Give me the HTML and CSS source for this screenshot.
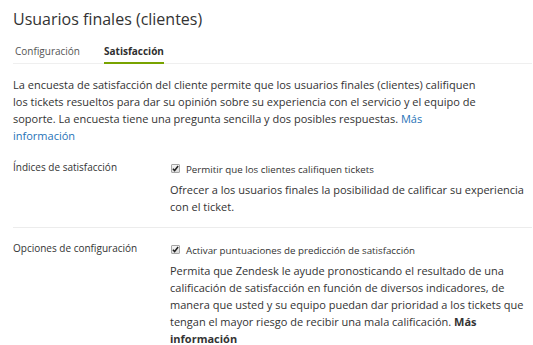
FILE: index.html
```html
<!DOCTYPE html>
<html>
<head>
    <title>Usuarios finales (clientes)</title>
    <link rel="stylesheet" href="styles.css">
</head>
<body>
    <div id="page">
        <h1 class="titulo">Usuarios finales (clientes)</h1>
        <div class="tabs">
            <span class="tab">Configuración</span>
            <span class="tab activo">Satisfacción</span>
        </div>
        <p class="intro">La encuesta de satisfacción del cliente permite que los usuarios finales (clientes) califiquen<br>los tickets resueltos para dar su opinión sobre su experiencia con el servicio y el equipo de<br>soporte. La encuesta tiene una pregunta sencilla y dos posibles respuestas. <a href="#" class="link">Más<br>información</a></p>

        <div class="fila">
            <div class="etiqueta">Índices de satisfacción</div>
            <div class="campo">
                <div class="check">
                    <span class="caja"><svg width="7" height="7" viewBox="0 0 8 8"><path d="M1 4.2 L3 6.3 L7 1.2" fill="none" stroke="#222" stroke-width="1.7"/></svg></span>
                    Permitir que los clientes califiquen tickets
                </div>
                <p class="desc">Ofrecer a los usuarios finales la posibilidad de calificar su experiencia<br>con el ticket.</p>
            </div>
        </div>

        <div class="fila ultima">
            <div class="etiqueta">Opciones de configuración</div>
            <div class="campo">
                <div class="check">
                    <span class="caja"><svg width="7" height="7" viewBox="0 0 8 8"><path d="M1 4.2 L3 6.3 L7 1.2" fill="none" stroke="#222" stroke-width="1.7"/></svg></span>
                    Activar puntuaciones de predicción de satisfacción
                </div>
                <p class="desc">Permita que Zendesk le ayude pronosticando el resultado de una<br>calificación de satisfacción en función de diversos indicadores, de<br>manera que usted y su equipo puedan dar prioridad a los tickets que<br>tengan el mayor riesgo de recibir una mala calificación. <b>Más<br>información</b></p>
            </div>
        </div>
    </div>
</body>
</html>
```
FILE: styles.css
```css
body {
    margin: 0;
    background-color: #ffffff;
    color: #333333;
    font-family: "Open Sans", Arial, sans-serif;
}

#page {
    padding: 9px 1px 0 13px;
}

.titulo {
    margin: 0;
    font-size: 16px;
    font-weight: normal;
    color: #333333;
    line-height: 20px;
}

.tabs {
    display: flex;
    gap: 24px;
    margin-top: 15px;
    padding-left: 2px;
    border-bottom: 1px solid #efefef;
}

.tab {
    font-size: 10px;
    line-height: 14px;
    color: #555555;
    padding-bottom: 4px;
    border-bottom: 2px solid transparent;
    margin-bottom: -1px;
}

.activo {
    font-weight: bold;
    color: #2f2f2f;
    border-bottom-color: #78a300;
}

.intro {
    margin: 12px 0 0;
    font-size: 11px;
    line-height: 17px;
    white-space: nowrap;
}

.link {
    color: #1f73b7;
    text-decoration: none;
}

.fila {
    display: flex;
    border-bottom: 1px solid #ececec;
    margin-top: 19px;
    padding-bottom: 12px;
}

.ultima {
    border-bottom: none;
    margin-top: 16px;
}

.etiqueta {
    width: 157px;
    font-size: 10px;
    line-height: 14px;
    margin-top: -3px;
}

.campo {
    flex: 1;
}

.check {
    display: flex;
    align-items: center;
    gap: 6px;
    font-size: 9.75px;
    line-height: 14px;
}

.caja {
    display: flex;
    align-items: center;
    justify-content: center;
    width: 7px;
    height: 7px;
    margin-left: 1px;
    margin-top: -3px;
    border: 1px solid #a5a5a5;
    border-radius: 1px;
    background: linear-gradient(#f6f6f6, #dddddd);
}

.desc {
    margin: 4px 0 0;
    font-size: 11px;
    line-height: 17px;
    white-space: nowrap;
}
```
